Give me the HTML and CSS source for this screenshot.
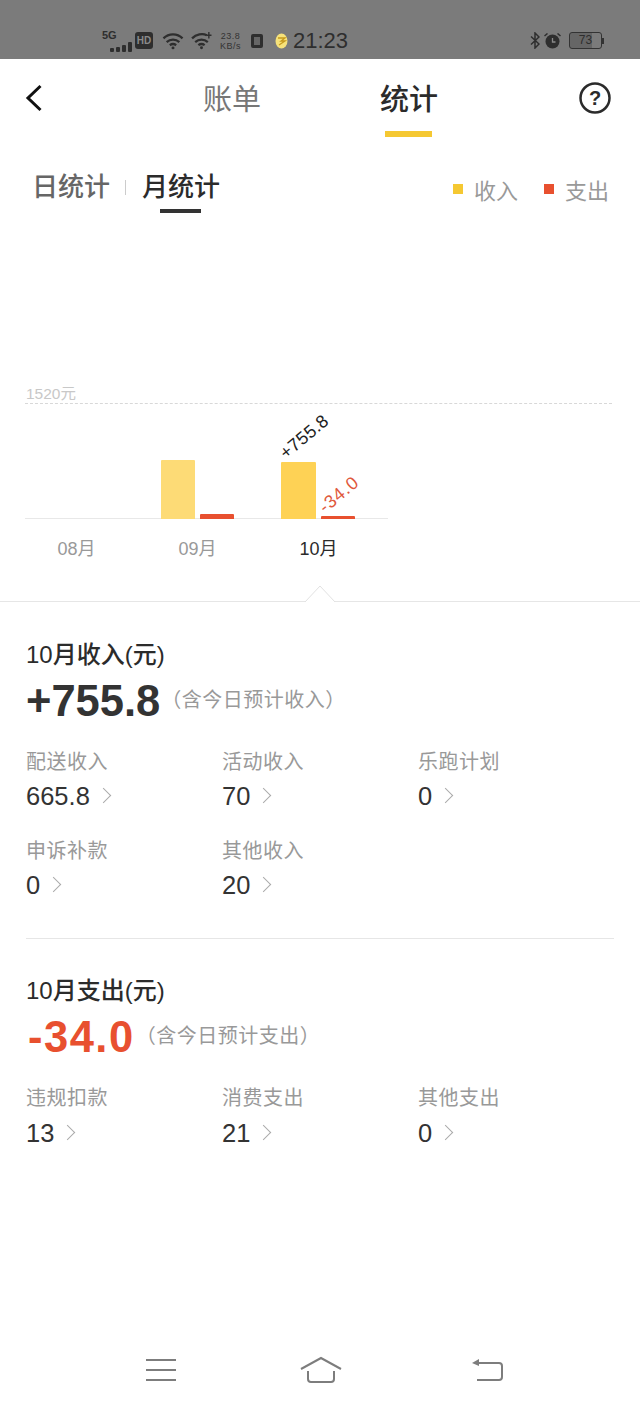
FILE: index.html
```html
<!DOCTYPE html>
<html lang="zh-CN">
<head>
    <meta charset="UTF-8">
    <meta name="viewport" content="width=device-width, initial-scale=1.0">
    <title>账单统计</title>
    <link rel="stylesheet" href="styles.css">
</head>
<body>
    <div class="page">

        <!-- Status bar -->
        <div class="status">
            <div class="status-left">
                <div class="sig">
                    <span class="sig-5g">5G</span>
                    <svg width="22" height="11" viewBox="0 0 22 11"><rect x="0" y="7" width="4" height="4" rx="1" fill="#2e2e2e"/><rect x="6" y="6" width="4" height="5" rx="1" fill="#2e2e2e"/><rect x="12" y="4" width="4" height="7" rx="1" fill="#2e2e2e"/><rect x="18" y="1" width="4" height="10" rx="1" fill="#2e2e2e"/></svg>
                </div>
                <span class="hd">HD</span>
                <svg class="wifi" width="22" height="18" viewBox="0 0 20 17" fill="none" stroke="#2e2e2e" stroke-width="2.200"><path d="M1 6c5-5 13-5 18 0"/><path d="M4 9.500c3.500-3 8.500-3 12 0"/><path d="M7 12.500c2-1.500 4-1.500 6 0"/><circle cx="10" cy="15" r="1.400" fill="#2e2e2e" stroke="none"/></svg>
                <svg class="wifi2" width="21" height="18" viewBox="0 0 20 17" fill="none" stroke="#2e2e2e" stroke-width="2.200"><path d="M1 6c4-4 10-5 14-3"/><path d="M4 9.500c3.500-3 8.500-3 12 0"/><path d="M7 12.500c2-1.500 4-1.500 6 0"/><circle cx="10" cy="15" r="1.400" fill="#2e2e2e" stroke="none"/><path d="M17 0v6M14.500 3h5" stroke-width="1.300"/></svg>
                <div class="speed"><span>23.8</span><span>KB/s</span></div>
                <span class="nfc"></span>
                <svg class="app-dot" width="13" height="16" viewBox="0 0 13 16"><ellipse cx="6.500" cy="8" rx="6" ry="7.500" fill="#f6e27a"/><path d="M3 5h7l-4 3h4l-6 4" fill="none" stroke="#c79a1d" stroke-width="1.300"/></svg>
                <span class="clock">21:23</span>
            </div>
            <div class="status-right">
                <svg width="10" height="17" viewBox="0 0 10 17" fill="none" stroke="#2e2e2e" stroke-width="1.500"><path d="M1 4.500l8 7.500-4 4V1l4 4-8 7.500"/></svg>
                <svg width="17" height="16" viewBox="0 0 17 16"><circle cx="8.500" cy="8.500" r="7" fill="#2e2e2e"/><path d="M8.500 5v4h3" fill="none" stroke="#8a8a8a" stroke-width="1.300"/><path d="M0.500 3l3-2.500M16.500 3l-3-2.500" stroke="#2e2e2e" stroke-width="1.500"/></svg>
                <div class="battery"><span class="battery-body">73</span><span class="battery-tip"></span></div>
            </div>
        </div>

        <!-- Top tabs -->
        <div class="nav">
            <svg class="back" width="18" height="28" viewBox="0 0 18 28" fill="none" stroke="#111" stroke-width="3"><path d="M15.500 2L3 14l12.500 12"/></svg>
            <div class="nav-tab">账单</div>
            <div class="nav-tab active">统计</div>
            <svg class="help" width="32" height="32" viewBox="0 0 32 32"><circle cx="16" cy="16" r="14.500" fill="none" stroke="#2b2b2b" stroke-width="2.500"/><text x="16" y="23" text-anchor="middle" class="help-mark">?</text></svg>
        </div>

        <!-- Day / month switch and legend -->
        <div class="sub">
            <div class="sub-tab">日统计</div>
            <span class="sub-sep"></span>
            <div class="sub-tab active">月统计</div>
            <div class="legend">
                <span class="dot yellow"></span><span class="legend-txt">收入</span>
                <span class="dot red"></span><span class="legend-txt">支出</span>
            </div>
        </div>

        <!-- Chart -->
        <div class="chart">
            <div class="max-label">1520元</div>
            <div class="plot">
                <div class="group"></div>
                <div class="group">
                    <div class="bar yellow-soft h-59"></div>
                    <div class="bar red h-5"></div>
                </div>
                <div class="group">
                    <div class="bar yellow-full h-57"><span class="bar-val">+755.8</span></div>
                    <div class="bar red h-3"><span class="bar-val neg">-34.0</span></div>
                </div>
            </div>
            <div class="months">
                <div class="month">08月</div>
                <div class="month">09月</div>
                <div class="month active">10月</div>
            </div>
        </div>

        <div class="rule">
            <svg class="arrow" width="32" height="18" viewBox="0 0 32 18" fill="#fff" stroke="#e2e2e2"><path d="M1 17L16 1l15 16"/></svg>
        </div>

        <!-- Income -->
        <div class="section">
            <div class="sec-title">10月收入(元)</div>
            <div class="sec-total"><span class="total">+755.8</span><span class="note">（含今日预计收入）</span></div>
            <div class="items">
                <div class="item"><div class="item-name">配送收入</div><div class="item-val">665.8<i class="chev"></i></div></div>
                <div class="item"><div class="item-name">活动收入</div><div class="item-val">70<i class="chev"></i></div></div>
                <div class="item"><div class="item-name">乐跑计划</div><div class="item-val">0<i class="chev"></i></div></div>
                <div class="item"><div class="item-name">申诉补款</div><div class="item-val">0<i class="chev"></i></div></div>
                <div class="item"><div class="item-name">其他收入</div><div class="item-val">20<i class="chev"></i></div></div>
            </div>
        </div>

        <div class="sec-line"></div>

        <!-- Expense -->
        <div class="section exp">
            <div class="sec-title">10月支出(元)</div>
            <div class="sec-total"><span class="total neg">-34.0</span><span class="note">（含今日预计支出）</span></div>
            <div class="items">
                <div class="item"><div class="item-name">违规扣款</div><div class="item-val">13<i class="chev"></i></div></div>
                <div class="item"><div class="item-name">消费支出</div><div class="item-val">21<i class="chev"></i></div></div>
                <div class="item"><div class="item-name">其他支出</div><div class="item-val">0<i class="chev"></i></div></div>
            </div>
        </div>

        <!-- Phone nav buttons -->
        <div class="softkeys">
            <svg class="key-menu" width="30" height="24" viewBox="0 0 30 24" stroke="#7d7d7d" stroke-width="2"><path d="M0 2h30M0 12h30M0 22h30"/></svg>
            <svg class="key-home" width="42" height="28" viewBox="0 0 42 28" fill="none" stroke="#7d7d7d" stroke-width="2"><path d="M1 13L21 2l20 11"/><path d="M8 15v8q0 3 3 3h20q3 0 3-3v-8"/></svg>
            <svg width="32" height="26" viewBox="0 0 32 26" fill="none" stroke="#7d7d7d" stroke-width="2"><path d="M5 7h23q3 0 3 3v11q0 3-3 3H6"/><path d="M1 7l7-4v7z" fill="#7d7d7d" stroke="none"/></svg>
        </div>
    </div>
</body>
</html>
```

FILE: styles.css
```css
* {
    margin: 0;
    padding: 0;
    box-sizing: border-box;
}

body {
    font-family: "Liberation Sans", "Noto Sans CJK SC", sans-serif;
    background: #fff;
    color: #2b2b2b;
}

.page {
    width: 640px;
    height: 1408px;
    display: flex;
    flex-direction: column;
    overflow: hidden;
}

/* status bar */
.status {
    height: 59px;
    background: #7b7b7b;
    padding: 22px 36px 0 102px;
    display: flex;
    justify-content: space-between;
    align-items: center;
    flex-shrink: 0;
}

.status-left, .status-right {
    display: flex;
    align-items: center;
}

.sig {
    width: 33px;
    height: 20px;
    position: relative;
}

.sig-5g {
    position: absolute;
    left: 0;
    top: -2px;
    font-size: 11px;
    font-weight: bold;
    color: #2e2e2e;
}

.sig svg {
    position: absolute;
    left: 8px;
    bottom: -1px;
}

.hd {
    width: 18px;
    height: 17px;
    background: #2e2e2e;
    border-radius: 3px;
    color: #8a8a8a;
    font-size: 10px;
    font-weight: bold;
    line-height: 17px;
    text-align: center;
}

.wifi { margin-left: 9px; }
.wifi2 { margin-left: 7px; }

.speed {
    margin-left: 8px;
    width: 21px;
    display: flex;
    flex-direction: column;
    align-items: center;
    font-size: 9px;
    line-height: 10px;
    letter-spacing: 0.5px;
    color: #333;
    white-space: nowrap;
}

.nfc {
    width: 12px;
    height: 14px;
    margin-left: 10px;
    border: 3px solid #2e2e2e;
    border-radius: 2px;
    background: #666;
}

.app-dot { margin-left: 12px; }

.clock {
    margin-left: 5px;
    font-size: 22px;
    color: #2e2e2e;
}

.status-right svg { margin-right: 4px; }

.battery {
    margin-left: 4px;
    display: flex;
    align-items: center;
}

.battery-body {
    width: 33px;
    height: 17px;
    border: 1px solid #333;
    border-radius: 3px;
    background: linear-gradient(90deg, #666 0, #666 72%, #7b7b7b 72%);
    font-size: 12px;
    line-height: 15px;
    text-align: center;
    color: #2e2e2e;
}

.battery-tip {
    width: 2px;
    height: 6px;
    background: #333;
}

/* top tabs */
.nav {
    height: 78px;
    position: relative;
    display: flex;
    justify-content: center;
    gap: 119px;
    padding-left: 1px;
    flex-shrink: 0;
}

.back {
    position: absolute;
    left: 25px;
    top: 25px;
}

.help {
    position: absolute;
    left: 579px;
    top: 23px;
}

.help-mark {
    font-size: 20px;
    font-weight: bold;
    fill: #2b2b2b;
}

.nav-tab {
    width: 58px;
    height: 78px;
    padding-top: 21px;
    font-size: 29px;
    line-height: 40px;
    color: #777;
    position: relative;
    text-align: center;
    white-space: nowrap;
}

.nav-tab.active {
    color: #2b2b2b;
    font-weight: 500;
}

.nav-tab.active::after {
    content: "";
    position: absolute;
    left: 5px;
    bottom: 0;
    width: 47px;
    height: 6px;
    background: #f5c832;
}

/* day/month */
.sub {
    height: 76px;
    padding: 32px 31px 0 32px;
    display: flex;
    align-items: flex-start;
    flex-shrink: 0;
}

.sub-tab {
    font-size: 26px;
    line-height: 36px;
    color: #666;
    position: relative;
    font-weight: 500;
}

.sub-tab.active {
    color: #2b2b2b;
}

.sub-tab.active::after {
    content: "";
    position: absolute;
    left: 18px;
    top: 40px;
    width: 41px;
    height: 4px;
    background: #333;
}

.sub-sep {
    width: 1px;
    height: 15px;
    margin: 11px 16px 0 15px;
    background: #ccc;
}

.legend {
    margin-left: auto;
    display: flex;
    align-items: center;
    height: 36px;
    margin-top: 2px;
    font-size: 22px;
    color: #999;
}

.dot {
    width: 10px;
    height: 10px;
    margin-right: 11px;
}

.dot.red {
    margin-left: 26px;
    background: #e8502f;
}

.dot.yellow { background: #f5c832; }

/* chart */
.chart {
    height: 388px;
    padding: 0 28px 0 25px;
    flex-shrink: 0;
    display: flex;
    flex-direction: column;
}

.max-label {
    margin-top: 171px;
    height: 20px;
    border-bottom: 1px dashed #d8d8d8;
    font-size: 15.5px;
    line-height: 19px;
    padding-left: 1px;
    color: #c8c8c8;
}

.plot {
    width: 363px;
    height: 115px;
    border-bottom: 1px solid #e8e8e8;
    display: flex;
    align-items: flex-end;
    padding-left: 16px;
    flex-shrink: 0;
}

.group {
    width: 120px;
    flex-shrink: 0;
    display: flex;
    align-items: flex-end;
    gap: 5px;
    margin-bottom: -1px;
}

.bar {
    width: 34px;
    position: relative;
    border-radius: 1px 1px 0 0;
}

.bar.red { background: #e8502f; }
.yellow-soft { background: #fddb76; }
.yellow-full { width: 35px; background: #fed255; }
.h-59 { height: 59px; }
.h-57 { height: 57px; }
.h-5 { height: 5px; }
.h-3 { height: 3px; }

.bar-val {
    position: absolute;
    left: 7px;
    bottom: 100%;
    font-size: 18px;
    line-height: 18px;
    letter-spacing: 0.3px;
    color: #222;
    white-space: nowrap;
    transform: rotate(-40deg);
    transform-origin: left bottom;
}

.bar-val.neg {
    left: 6px;
    color: #e0583c;
    letter-spacing: 1px;
}

.months {
    display: flex;
    margin-left: -9px;
    margin-top: 17px;
}

.month {
    width: 121px;
    flex-shrink: 0;
    text-align: center;
    font-size: 18px;
    line-height: 26px;
    color: #999;
}

.month.active { color: #2b2b2b; }

/* divider with arrow */
.rule {
    height: 1px;
    background: #e6e6e6;
    position: relative;
    flex-shrink: 0;
}

.arrow {
    position: absolute;
    left: 304px;
    top: -16px;
}

/* sections */
.section {
    padding: 38px 0 0 26px;
    flex-shrink: 0;
}

.section.exp { padding-top: 37px; }
.section.exp .item-val { margin-top: 3px; }

.sec-title {
    font-size: 24px;
    line-height: 30px;
    font-weight: 500;
    color: #2b2b2b;
}

.sec-total {
    display: flex;
    align-items: center;
    height: 50px;
    margin-top: 6px;
}

.total {
    font-size: 43.5px;
    font-weight: bold;
    color: #333;
}

.total.neg {
    color: #e8502f;
    letter-spacing: 1.5px;
    padding-left: 2px;
}

.note {
    font-size: 20px;
    letter-spacing: 0.5px;
    color: #999;
    margin-left: 1px;
    margin-top: -6px;
}

.items {
    display: grid;
    grid-template-columns: repeat(3, 196px);
    row-gap: 23px;
    margin-top: 22px;
}

.item-name {
    font-size: 20px;
    letter-spacing: 0.5px;
    line-height: 28px;
    color: #999;
}

.item-val {
    margin-top: 2px;
    font-size: 25.5px;
    line-height: 36px;
    height: 36px;
    color: #333;
    display: flex;
    align-items: center;
}

.chev {
    width: 11px;
    height: 11px;
    margin-left: 8px;
    margin-top: -2px;
    border-top: 1px solid #aaa;
    border-right: 1px solid #aaa;
    transform: rotate(45deg);
}

.sec-line {
    height: 1px;
    margin: 35px 26px 0;
    background: #e6e6e6;
    flex-shrink: 0;
}

/* phone soft keys */
.softkeys {
    margin-top: auto;
    height: 52px;
    padding: 0 137px 0 146px;
    display: flex;
    justify-content: space-between;
    align-items: flex-start;
}

.key-menu { margin-top: 2px; }
.key-home { margin-left: -6px; }
```
